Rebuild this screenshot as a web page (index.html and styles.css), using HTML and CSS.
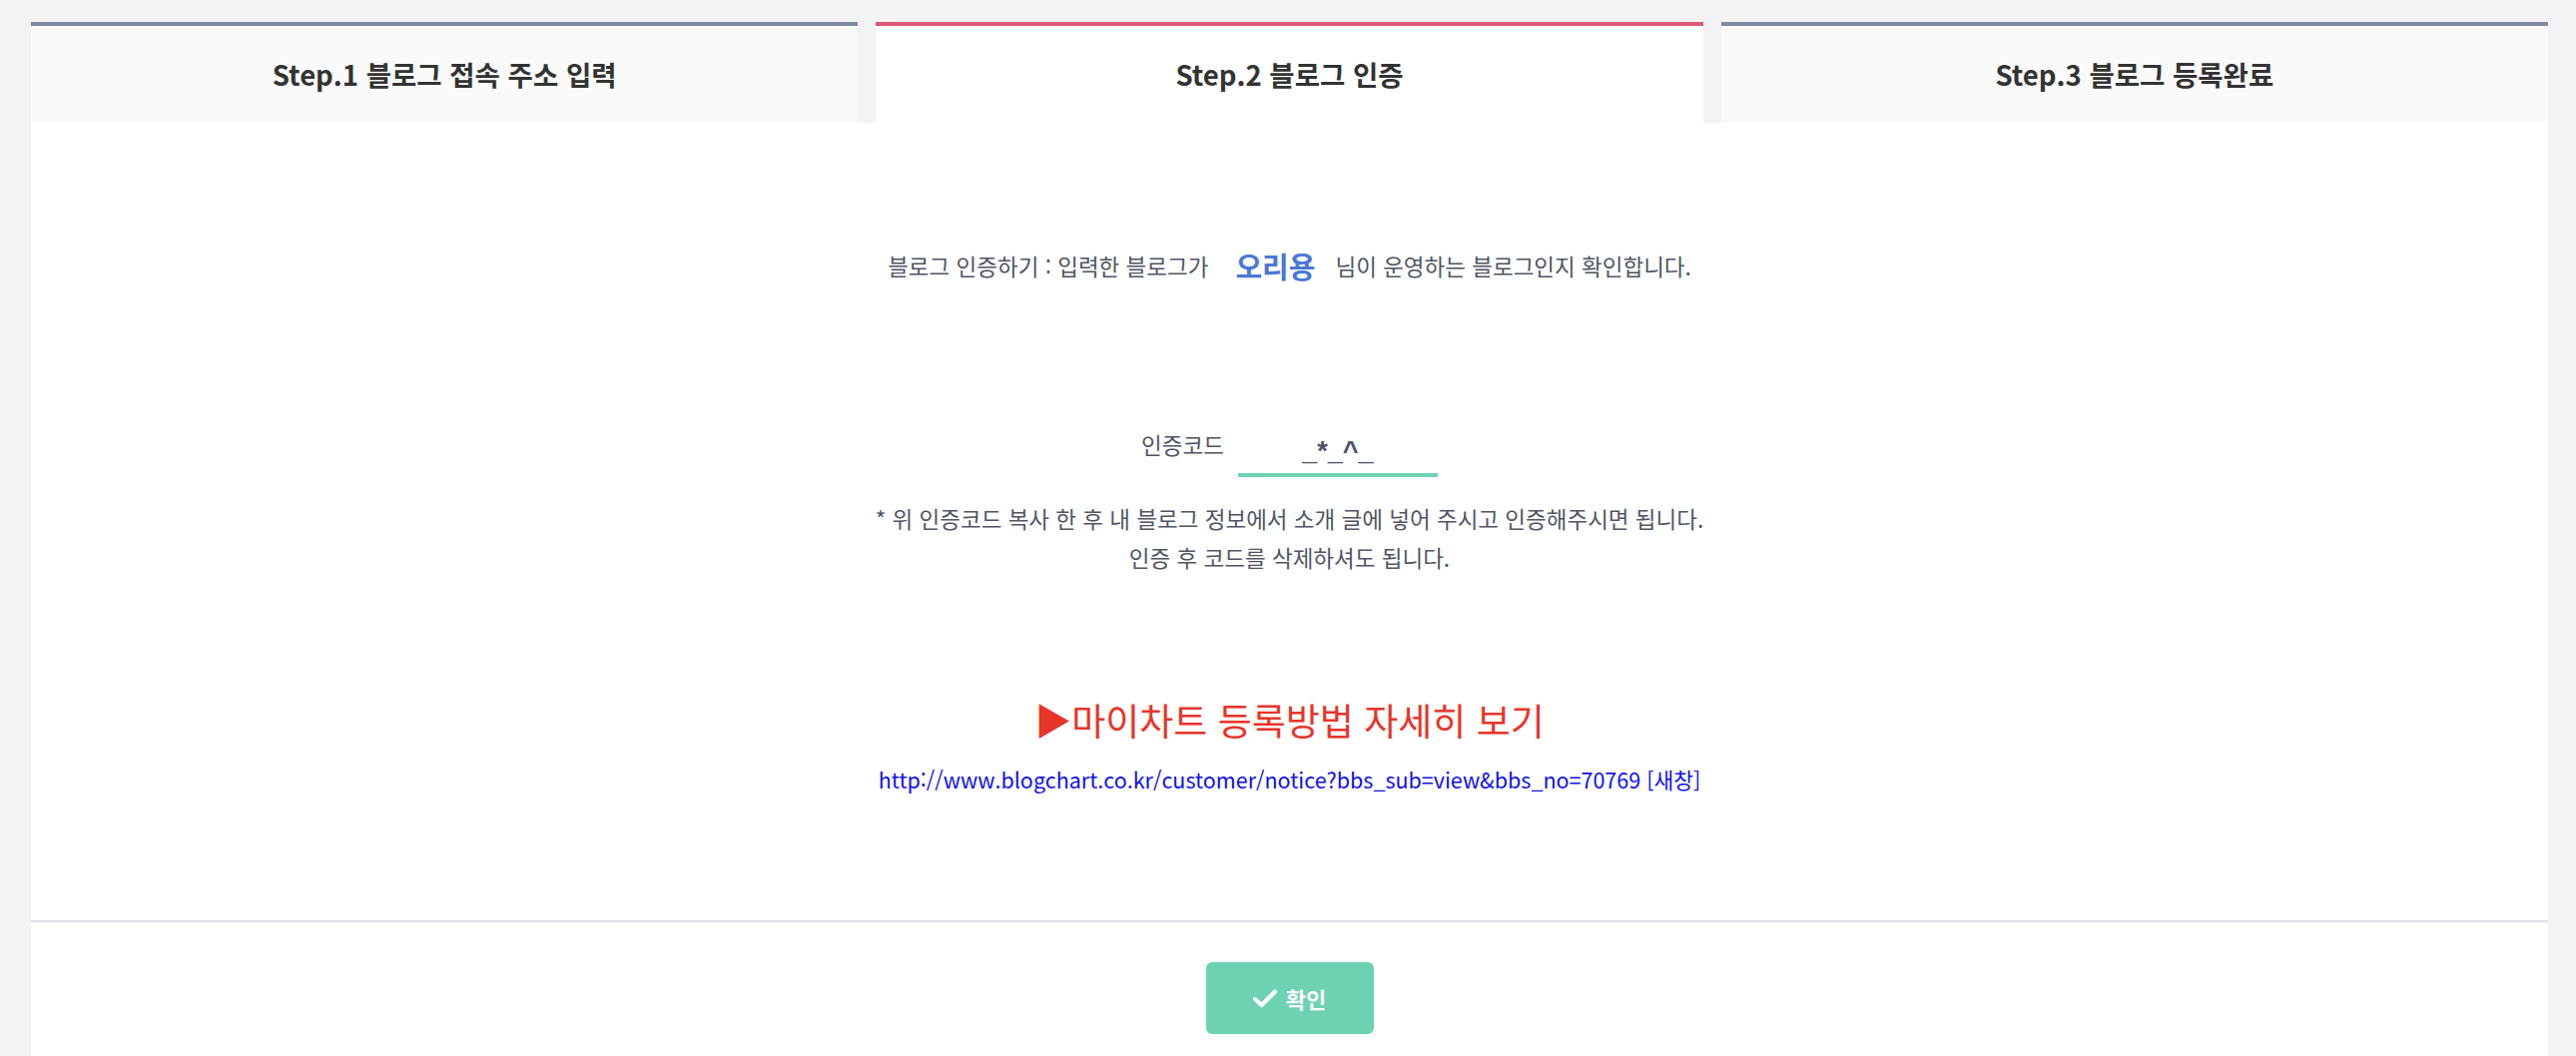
FILE: index.html
```html
<!DOCTYPE html>
<html lang="ko">
<head>
<meta charset="utf-8">
<title>블로그 인증</title>
<link rel="stylesheet" href="styles.css">
</head>
<body>
<div class="wrap">
  <div class="tabs">
    <div class="tab">Step.1 블로그 접속 주소 입력</div>
    <div class="tab active">Step.2 블로그 인증</div>
    <div class="tab">Step.3 블로그 등록완료</div>
  </div>
  <div class="panel">
    <div class="body">
      <p class="intro">블로그 인증하기 : 입력한 블로그가<span class="owner">오리용</span>님이 운영하는 블로그인지 확인합니다.</p>
      <div class="code-row">
        <label class="code-label">인증코드</label>
        <div class="code-input">_*_^_</div>
      </div>
      <p class="help">* 위 인증코드 복사 한 후 내 블로그 정보에서 소개 글에 넣어 주시고 인증해주시면 됩니다.<br>인증 후 코드를 삭제하셔도 됩니다.</p>
      <p class="guide">▶마이차트 등록방법 자세히 보기</p>
      <p class="url"><a href="#">http://www.blogchart.co.kr/customer/notice?bbs_sub=view&amp;bbs_no=70769 [새창]</a></p>
    </div>
    <div class="footer">
      <button class="ok" type="button">
        <svg class="check" width="24" height="20" viewBox="0 0 24 20" aria-hidden="true"><path d="M2 11 L8.5 17 L22 3.5" fill="none" stroke="#fff" stroke-width="4.2" stroke-linecap="round" stroke-linejoin="round"/></svg>
        <span>확인</span>
      </button>
    </div>
  </div>
</div>
</body>
</html>
```

FILE: styles.css
```css
html, body {
  margin: 0;
  padding: 0;
}
body {
  background: #f3f3f3;
  font-family: "Noto Sans CJK KR", "Noto Sans", sans-serif;
  color: #505565;
}
.wrap {
  margin: 22px 28px 0 31px;
}
.tabs {
  display: flex;
  gap: 18px;
}
.tab {
  flex: 1;
  height: 97px;
  line-height: 97px;
  text-align: center;
  background: #fafafa;
  border-top: 4px solid #818aa2;
  font-size: 27.5px;
  font-weight: 700;
  color: #333;
}
.tab.active {
  background: #fff;
  border-top-color: #da5b74;
}
.panel {
  background: #fff;
}
.body {
  padding: 128px 0 126px;
  text-align: center;
  border-bottom: 2px solid #dcdde6;
}
.intro {
  margin: 0;
  font-size: 22.5px;
  line-height: 30px;
}
.owner {
  display: inline-block;
  margin: 0 20px 0 27px;
  font-size: 29px;
  font-weight: 700;
  color: #4a78d4;
  vertical-align: top;
}
.code-row {
  display: flex;
  justify-content: center;
  align-items: flex-start;
  gap: 14px;
  margin-top: 149px;
}
.code-label {
  font-size: 22.5px;
  line-height: 30px;
}
.code-input {
  width: 200px;
  height: 44px;
  line-height: 44px;
  border-bottom: 4px solid #6dd3b4;
  font-family: "Liberation Sans", Arial, sans-serif;
  font-weight: 700;
  font-size: 27px;
  color: #4b5068;
  text-align: center;
}
.help {
  margin: 22px 0 0;
  font-size: 22.5px;
  line-height: 39px;
}
.guide {
  margin: 118px 0 0;
  font-size: 37px;
  line-height: 50px;
  color: #e8352a;
}
.url {
  margin: 20px 0 0;
  font-size: 21.5px;
  line-height: 30px;
}
.url a {
  color: #1010f0;
  text-decoration: none;
}
.footer {
  padding-top: 40px;
  height: 200px;
  text-align: center;
}
.ok {
  display: inline-flex;
  align-items: center;
  justify-content: center;
  gap: 9px;
  width: 168px;
  height: 72px;
  border: 0;
  border-radius: 6px;
  background: #6cd2b2;
  color: #fff;
  font-family: "Noto Sans CJK KR", "Noto Sans", sans-serif;
  font-size: 22px;
  font-weight: 700;
  padding: 0;
}
.check {
  display: block;
}
```
